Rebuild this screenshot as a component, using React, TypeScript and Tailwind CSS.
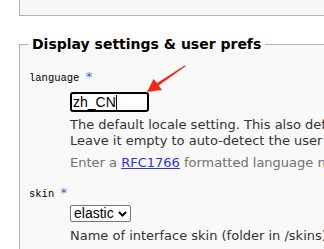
export default function App() {
  return (
    <div className="relative w-[324px] h-[249px] overflow-hidden bg-white font-['DejaVu_Sans',sans-serif] text-[#333]">
      <div className="ml-[19px] w-[400px] h-[16px] border-l border-b border-[#b4b4b4] bg-[#f7f7f7]" />

      <fieldset className="ml-[19px] mt-[20px] w-[400px] h-[300px] border border-[#b4b4b4] bg-[#f9f9f9]">
        <legend className="ml-[8px] px-[4px] text-[14px] leading-[16px] font-bold text-black">
          Display settings &amp; user prefs
        </legend>

        <div className="pl-[9px]">
          <div className="mt-[17px] h-[16px] leading-[16px] text-[10.5px] font-['Liberation_Mono',monospace] text-black">
            language{" "}
            <span className="font-['DejaVu_Sans',sans-serif] text-[13px] text-[#2f62f5]">*</span>
          </div>

          <div className="ml-[41px]">
            <div className="mt-[7px] flex items-center w-[79px] h-[20px] border-2 border-black rounded-[3px] bg-white pl-[1px] font-['Liberation_Sans',sans-serif] text-[14px] text-black">
              zh_CN
              <span className="w-px h-[15px] bg-black" />
            </div>

            <div className="mt-[5px] text-[13px] leading-[16px] whitespace-nowrap">
              <div>The default locale setting. This also defines the date format.</div>
              <div>Leave it empty to auto-detect the user agent language.</div>
            </div>

            <div className="mt-[6px] text-[13px] leading-[16px] whitespace-nowrap text-[#707070]">
              Enter a <span className="text-[#2c35d6] underline">RFC1766</span> formatted language name
            </div>
          </div>

          <div className="mt-[14px] h-[16px] leading-[16px] text-[10.5px] font-['Liberation_Mono',monospace] text-black">
            skin{" "}
            <span className="font-['DejaVu_Sans',sans-serif] text-[13px] text-[#2f62f5]">*</span>
          </div>

          <div className="ml-[41px]">
            <div className="mt-[3px] inline-flex items-center gap-[4px] h-[17px] w-[61px] border border-[#767676] rounded-[2px] bg-white pl-[3px] font-['Liberation_Sans',sans-serif] text-[14px] text-black">
              elastic
              <svg width="9" height="6" viewBox="0 0 9 6">
                <path d="M1 1 L4.5 4.5 L8 1" fill="none" stroke="black" strokeWidth="2" />
              </svg>
            </div>

            <div className="mt-[3px] text-[13px] leading-[16px] whitespace-nowrap">
              Name of interface skin (folder in /skins)
            </div>
          </div>
        </div>
      </fieldset>

      <svg className="absolute left-0 top-0 pointer-events-none" width="324" height="249">
        <polygon
          points="147,92 153.5,79 157.1,83.1 185,65.3 185.6,66.2 158.7,85.5 162,90"
          fill="#ee2a1c"
        />
      </svg>
    </div>
  );
}
